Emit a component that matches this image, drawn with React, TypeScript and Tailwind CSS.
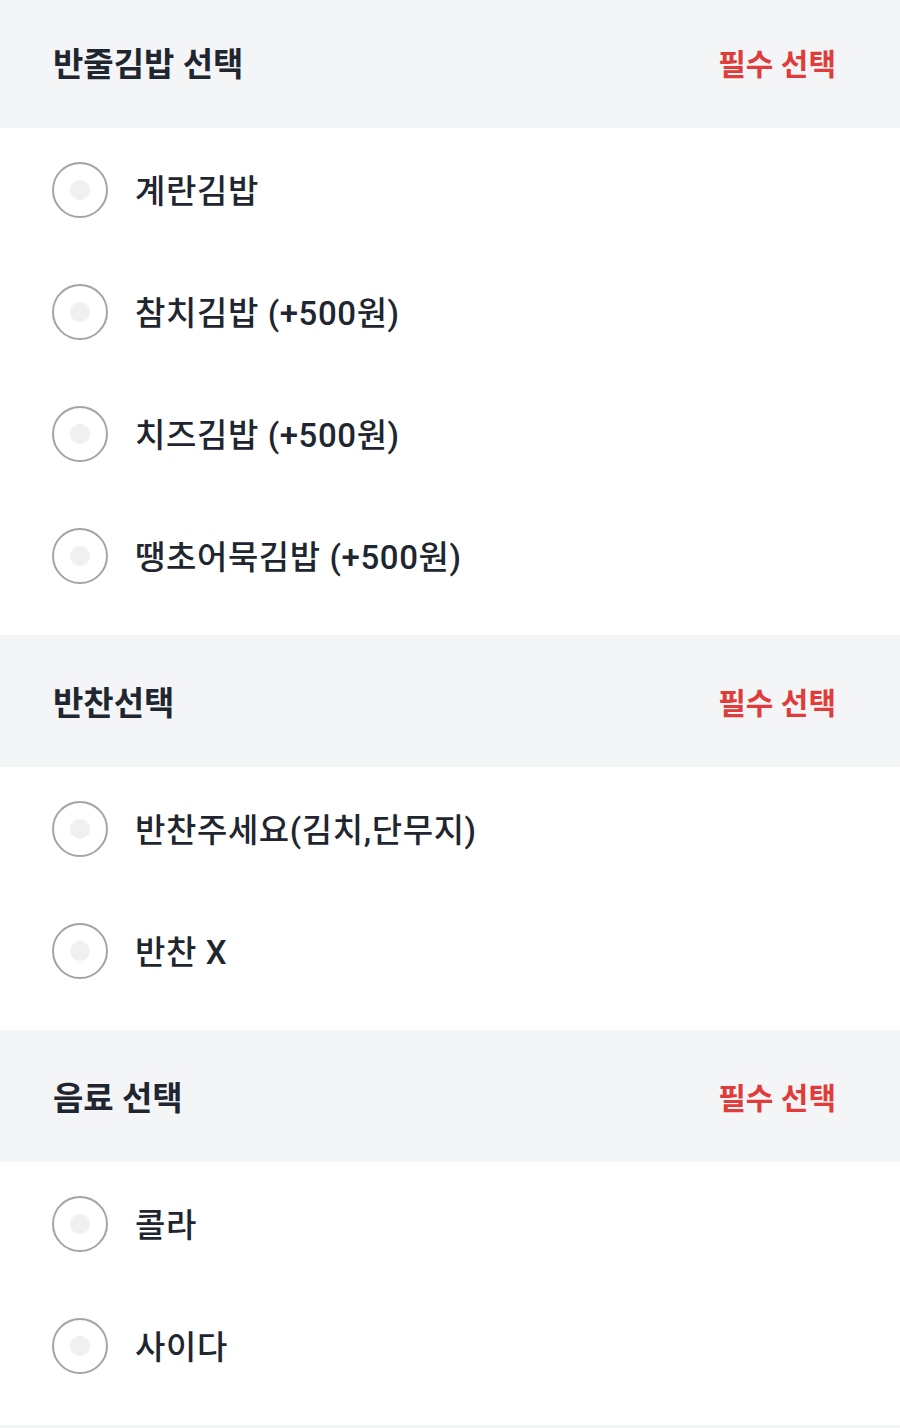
const sections = [
  {
    title: "반줄김밥 선택",
    options: ["계란김밥", "참치김밥 (+500원)", "치즈김밥 (+500원)", "땡초어묵김밥 (+500원)"],
  },
  {
    title: "반찬선택",
    options: ["반찬주세요(김치,단무지)", "반찬 X"],
  },
  {
    title: "음료 선택",
    options: ["콜라", "사이다"],
  },
];

function Radio() {
  return (
    <span className="flex size-[56px] shrink-0 items-center justify-center rounded-full border-2 border-[#a0a5ab] bg-white">
      <span className="size-[20px] rounded-full bg-[#eff0f2]" />
    </span>
  );
}

export default function App() {
  return (
    <div
      className="-mt-[4px] w-[900px] bg-white"
      style={{ fontFamily: 'Roboto, "Noto Sans CJK KR", sans-serif' }}
    >
      {sections.map((section) => (
        <section key={section.title}>
          <div className="flex h-[132px] items-center justify-between bg-[#f4f5f7] pl-[53px] pr-[64px] pt-[5px]">
            <h2 className="text-[33px] font-bold text-[#1f2630]">{section.title}</h2>
            <span className="text-[30px] font-bold text-[#e03c3c]">필수 선택</span>
          </div>
          <ul className="pb-[18px] pt-[1px]">
            {section.options.map((option) => (
              <li key={option} className="flex h-[122px] items-center gap-[27px] pl-[52px]">
                <Radio />
                <span className="pt-[3px] text-[33px] font-medium tracking-[0.6px] text-[#1f2630]">
                  {option}
                </span>
              </li>
            ))}
          </ul>
        </section>
      ))}
      <div className="h-[12px] bg-[#f4f5f7]" />
    </div>
  );
}
